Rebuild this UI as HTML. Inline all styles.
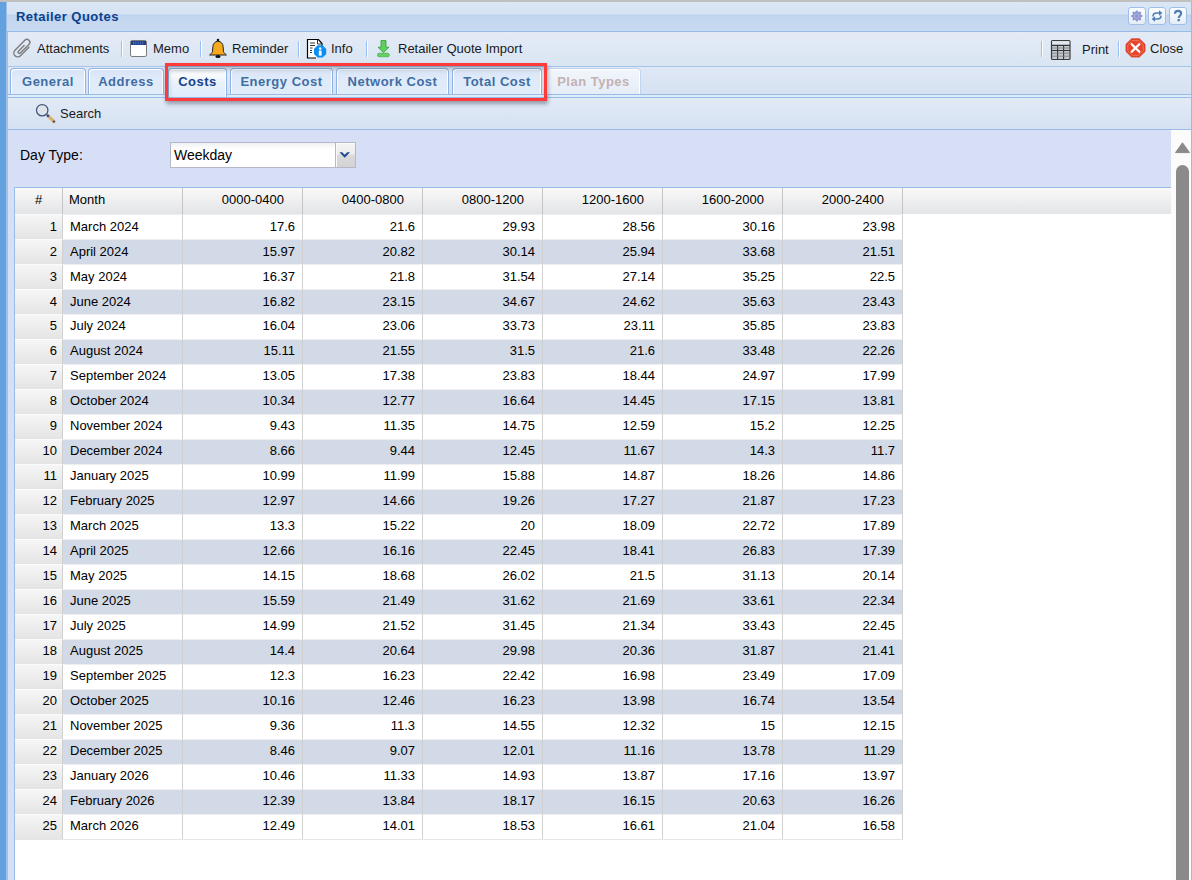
<!DOCTYPE html>
<html><head><meta charset="utf-8">
<style>
*{margin:0;padding:0;box-sizing:border-box}
html,body{width:1192px;height:880px;overflow:hidden;background:#fff;font-family:"Liberation Sans",sans-serif;font-size:13px;color:#000}
.abs{position:absolute}
#topline{left:0;top:0;width:1192px;height:2px;background:#c0c0c0}
#lbar{left:0;top:2px;width:6px;height:878px;background:#63a1de}
#lb2{left:6px;top:32px;width:2px;height:878px;background:#9fc0e9}
#rb{left:1191px;top:2px;width:1px;height:878px;background:#99bbe8}
#hdr{left:6px;top:2px;width:1185px;border-left:1px solid #9ebfea;height:30px;border-bottom:1px solid #99bbe8;
 background:linear-gradient(#dbe6f5 0,#d6e3f3 12px,#bcd2ee 13px,#c2d6ef 15px,#c8daf0 100%)}
#title{left:16px;top:9px;font-weight:bold;color:#0b3f8f;line-height:15px;white-space:nowrap;letter-spacing:.45px}
.tool{top:7px;width:18px;height:18px;border:1px solid #9fbfe9;border-radius:3px;background:linear-gradient(#fbfdff,#f1f6fd 50%,#e3edf9)}
#tb1{left:8px;top:32px;width:1183px;height:34px;background:linear-gradient(#e3ebf6,#dae5f3)}
.t{line-height:15px;white-space:nowrap;color:#1a1a1a}
.sep{top:41px;width:2px;height:16px;border-left:1px solid #98c0f4;border-right:1px solid #fff}
#tabbar{left:8px;top:66px;width:1183px;height:32px;background:linear-gradient(#dfe8f5,#d4e1f1);border-top:1px solid #a6c3ea}
.tab{top:68px;height:26px;border:1px solid #8db2e3;border-bottom:none;border-radius:4px 4px 0 0;
 background:linear-gradient(#d8e5f7,#dfeafa 40%,#e2edfb);box-shadow:inset 1px 1px 0 #fff,inset -1px 0 0 #fff;font-weight:bold;color:#416da3;text-align:center;line-height:15px;padding-top:5px;letter-spacing:.5px}
.tab.act{height:29px;background:linear-gradient(#d9dde2 0,#eef1f5 3px,#f9fbfd 6px,#e9f1fb 50%,#deecfd 100%);color:#15428b}
.tab.dis{color:#c4b1b3;background:linear-gradient(#f2f6fb,#e5edf8);border-color:#c2d5ee}
#strip{left:8px;top:94px;width:1183px;height:4px;border-top:1px solid #99bbe8;border-bottom:1px solid #99bbe8;background:#deecfd}
#tb2{left:8px;top:98px;width:1183px;height:32px;border-bottom:1px solid #99bbe8;background:linear-gradient(#e2eaf6,#d5e1f1)}
#form{left:8px;top:130px;width:1163px;height:57px;background:#d7dff7}
#lfill{left:8px;top:187px;width:6px;height:693px;background:#d7dff7}
#combo{left:170px;top:142px;width:186px;height:26px;border:1px solid #b5b8c8;background:linear-gradient(#eef0f2,#fff 6px)}
#trig{left:335px;top:142px;width:21px;height:26px;border:1px solid #b5b8c8;background:linear-gradient(#f4f4f4 0,#ededed 45%,#dadada 52%,#d3d3d3 100%);box-shadow:inset 1px 1px 0 #fafafa}
#grid{left:14px;top:187px;width:1157px;height:693px;border-left:1px solid #99bbe8;border-top:1px solid #99bbe8;background:#fff;overflow:hidden}
#sb{left:1171px;top:130px;width:20px;height:750px;background:#fbfbfb}
.r{position:relative;height:25px;display:flex;white-space:nowrap;line-height:15px}
.c{height:25px;width:120px;border-right:1px solid #d0d0d0;border-top:1px solid #efefef;padding:4px 7px 0 7px;text-align:right;flex:none;background-clip:padding-box}
.rn{width:48px;border-top-color:#fbfbfb;background:linear-gradient(#f6f6f6,#e4e4e4);padding-right:5px}
.m{text-align:left;padding-left:7px}
.fill{width:300px;border-right:none;border-top-color:#fff}
.alt .c{background:#d2d9e7}
.alt .rn{background:linear-gradient(#f6f6f6,#e4e4e4)}
.alt .fill{background:#fff}
.up .c{padding-top:3px}
.hd{height:26px;display:flex;white-space:nowrap;line-height:15px}
.hd .c{height:26px;background:linear-gradient(#f9f9f9,#e3e4e6);border-right:1px solid #c5c5c5;border-top:none;padding:4px 18px 0 6px}
.hd .h0{width:48px;text-align:center;padding:4px 0 0 0}
.hd .h1{text-align:left;padding-left:6px}
.hd .fill{width:300px;border-right:none;border-top-color:#fff}
</style></head><body>
<div id="topline" class="abs"></div>
<div id="hdr" class="abs"></div>
<div id="title" class="abs">Retailer Quotes</div>
<div class="abs tool" style="left:1128px"></div>
<div class="abs tool" style="left:1148px"></div>
<div class="abs tool" style="left:1169px"></div>

<div id="tb1" class="abs"></div>
<div class="abs t" style="left:37px;top:41px">Attachments</div>
<div class="abs sep" style="left:121px"></div>
<div class="abs t" style="left:153px;top:41px">Memo</div>
<div class="abs sep" style="left:200px"></div>
<div class="abs t" style="left:232px;top:41px">Reminder</div>
<div class="abs sep" style="left:298px"></div>
<div class="abs t" style="left:331px;top:41px">Info</div>
<div class="abs sep" style="left:366px"></div>
<div class="abs t" style="left:398px;top:41px">Retailer Quote Import</div>
<div class="abs sep" style="left:1041px"></div>
<div class="abs t" style="left:1082px;top:42px">Print</div>
<div class="abs sep" style="left:1118px"></div>
<div class="abs t" style="left:1150px;top:41px">Close</div>

<div id="tabbar" class="abs"></div>
<div class="abs tab" style="left:10px;width:76px">General</div>
<div class="abs tab" style="left:88px;width:76px">Address</div>
<div class="abs tab" style="left:230px;width:103px">Energy Cost</div>
<div class="abs tab" style="left:336px;width:113px">Network Cost</div>
<div class="abs tab" style="left:452px;width:90px">Total Cost</div>
<div class="abs tab dis" style="left:546px;width:95px">Plan Types</div>
<div id="strip" class="abs"></div>
<div class="abs tab act" style="left:168px;width:59px">Costs</div>

<div id="tb2" class="abs"></div>
<div class="abs t" style="left:60px;top:106px">Search</div>

<div id="form" class="abs"></div>
<div id="lfill" class="abs"></div>
<div class="abs t" style="left:20px;top:147px;font-size:14px;line-height:16px;color:#000">Day Type:</div>
<div id="combo" class="abs"></div>
<div id="trig" class="abs"></div>
<div class="abs t" style="left:174px;top:147px;font-size:14px;line-height:16px;color:#000">Weekday</div>

<div id="grid" class="abs">
<div class="hd"><div class="c h0">#</div><div class="c h1">Month</div><div class="c">0000-0400</div><div class="c">0400-0800</div><div class="c">0800-1200</div><div class="c">1200-1600</div><div class="c">1600-2000</div><div class="c">2000-2400</div><div class="c fill"></div></div>
<div class="r"><div class="c rn">1</div><div class="c m">March 2024</div><div class="c n">17.6</div><div class="c n">21.6</div><div class="c n">29.93</div><div class="c n">28.56</div><div class="c n">30.16</div><div class="c n">23.98</div><div class="c fill"></div></div>
<div class="r alt"><div class="c rn">2</div><div class="c m">April 2024</div><div class="c n">15.97</div><div class="c n">20.82</div><div class="c n">30.14</div><div class="c n">25.94</div><div class="c n">33.68</div><div class="c n">21.51</div><div class="c fill"></div></div>
<div class="r"><div class="c rn">3</div><div class="c m">May 2024</div><div class="c n">16.37</div><div class="c n">21.8</div><div class="c n">31.54</div><div class="c n">27.14</div><div class="c n">35.25</div><div class="c n">22.5</div><div class="c fill"></div></div>
<div class="r alt"><div class="c rn">4</div><div class="c m">June 2024</div><div class="c n">16.82</div><div class="c n">23.15</div><div class="c n">34.67</div><div class="c n">24.62</div><div class="c n">35.63</div><div class="c n">23.43</div><div class="c fill"></div></div>
<div class="r up"><div class="c rn">5</div><div class="c m">July 2024</div><div class="c n">16.04</div><div class="c n">23.06</div><div class="c n">33.73</div><div class="c n">23.11</div><div class="c n">35.85</div><div class="c n">23.83</div><div class="c fill"></div></div>
<div class="r up alt"><div class="c rn">6</div><div class="c m">August 2024</div><div class="c n">15.11</div><div class="c n">21.55</div><div class="c n">31.5</div><div class="c n">21.6</div><div class="c n">33.48</div><div class="c n">22.26</div><div class="c fill"></div></div>
<div class="r up"><div class="c rn">7</div><div class="c m">September 2024</div><div class="c n">13.05</div><div class="c n">17.38</div><div class="c n">23.83</div><div class="c n">18.44</div><div class="c n">24.97</div><div class="c n">17.99</div><div class="c fill"></div></div>
<div class="r up alt"><div class="c rn">8</div><div class="c m">October 2024</div><div class="c n">10.34</div><div class="c n">12.77</div><div class="c n">16.64</div><div class="c n">14.45</div><div class="c n">17.15</div><div class="c n">13.81</div><div class="c fill"></div></div>
<div class="r up"><div class="c rn">9</div><div class="c m">November 2024</div><div class="c n">9.43</div><div class="c n">11.35</div><div class="c n">14.75</div><div class="c n">12.59</div><div class="c n">15.2</div><div class="c n">12.25</div><div class="c fill"></div></div>
<div class="r up alt"><div class="c rn">10</div><div class="c m">December 2024</div><div class="c n">8.66</div><div class="c n">9.44</div><div class="c n">12.45</div><div class="c n">11.67</div><div class="c n">14.3</div><div class="c n">11.7</div><div class="c fill"></div></div>
<div class="r up"><div class="c rn">11</div><div class="c m">January 2025</div><div class="c n">10.99</div><div class="c n">11.99</div><div class="c n">15.88</div><div class="c n">14.87</div><div class="c n">18.26</div><div class="c n">14.86</div><div class="c fill"></div></div>
<div class="r up alt"><div class="c rn">12</div><div class="c m">February 2025</div><div class="c n">12.97</div><div class="c n">14.66</div><div class="c n">19.26</div><div class="c n">17.27</div><div class="c n">21.87</div><div class="c n">17.23</div><div class="c fill"></div></div>
<div class="r up"><div class="c rn">13</div><div class="c m">March 2025</div><div class="c n">13.3</div><div class="c n">15.22</div><div class="c n">20</div><div class="c n">18.09</div><div class="c n">22.72</div><div class="c n">17.89</div><div class="c fill"></div></div>
<div class="r up alt"><div class="c rn">14</div><div class="c m">April 2025</div><div class="c n">12.66</div><div class="c n">16.16</div><div class="c n">22.45</div><div class="c n">18.41</div><div class="c n">26.83</div><div class="c n">17.39</div><div class="c fill"></div></div>
<div class="r up"><div class="c rn">15</div><div class="c m">May 2025</div><div class="c n">14.15</div><div class="c n">18.68</div><div class="c n">26.02</div><div class="c n">21.5</div><div class="c n">31.13</div><div class="c n">20.14</div><div class="c fill"></div></div>
<div class="r up alt"><div class="c rn">16</div><div class="c m">June 2025</div><div class="c n">15.59</div><div class="c n">21.49</div><div class="c n">31.62</div><div class="c n">21.69</div><div class="c n">33.61</div><div class="c n">22.34</div><div class="c fill"></div></div>
<div class="r up"><div class="c rn">17</div><div class="c m">July 2025</div><div class="c n">14.99</div><div class="c n">21.52</div><div class="c n">31.45</div><div class="c n">21.34</div><div class="c n">33.43</div><div class="c n">22.45</div><div class="c fill"></div></div>
<div class="r up alt"><div class="c rn">18</div><div class="c m">August 2025</div><div class="c n">14.4</div><div class="c n">20.64</div><div class="c n">29.98</div><div class="c n">20.36</div><div class="c n">31.87</div><div class="c n">21.41</div><div class="c fill"></div></div>
<div class="r up"><div class="c rn">19</div><div class="c m">September 2025</div><div class="c n">12.3</div><div class="c n">16.23</div><div class="c n">22.42</div><div class="c n">16.98</div><div class="c n">23.49</div><div class="c n">17.09</div><div class="c fill"></div></div>
<div class="r up alt"><div class="c rn">20</div><div class="c m">October 2025</div><div class="c n">10.16</div><div class="c n">12.46</div><div class="c n">16.23</div><div class="c n">13.98</div><div class="c n">16.74</div><div class="c n">13.54</div><div class="c fill"></div></div>
<div class="r up"><div class="c rn">21</div><div class="c m">November 2025</div><div class="c n">9.36</div><div class="c n">11.3</div><div class="c n">14.55</div><div class="c n">12.32</div><div class="c n">15</div><div class="c n">12.15</div><div class="c fill"></div></div>
<div class="r up alt"><div class="c rn">22</div><div class="c m">December 2025</div><div class="c n">8.46</div><div class="c n">9.07</div><div class="c n">12.01</div><div class="c n">11.16</div><div class="c n">13.78</div><div class="c n">11.29</div><div class="c fill"></div></div>
<div class="r up"><div class="c rn">23</div><div class="c m">January 2026</div><div class="c n">10.46</div><div class="c n">11.33</div><div class="c n">14.93</div><div class="c n">13.87</div><div class="c n">17.16</div><div class="c n">13.97</div><div class="c fill"></div></div>
<div class="r up alt"><div class="c rn">24</div><div class="c m">February 2026</div><div class="c n">12.39</div><div class="c n">13.84</div><div class="c n">18.17</div><div class="c n">16.15</div><div class="c n">20.63</div><div class="c n">16.26</div><div class="c fill"></div></div>
<div class="r up"><div class="c rn">25</div><div class="c m">March 2026</div><div class="c n">12.49</div><div class="c n">14.01</div><div class="c n">18.53</div><div class="c n">16.61</div><div class="c n">21.04</div><div class="c n">16.58</div><div class="c fill"></div></div>
</div>
<div class="abs" style="left:15px;top:839px;width:888px;height:1px;background:#e6e6e6"></div>
<div id="sb" class="abs"></div>

<svg class="abs" style="left:0;top:0" width="1192" height="880" viewBox="0 0 1192 880">
<!-- paperclip -->
<g transform="translate(22.4,48.6) rotate(45) scale(1.22)" fill="none" stroke="#7c7c7c" stroke-width="1.15" stroke-linecap="round">
<path d="M3,-4.5 L3,5.2 A3.2,3.2 0 0 1 -3.4,5.2 L-3.4,-6.2 A2.4,2.4 0 0 1 1.4,-6.2 L1.4,3.8 A1.1,1.1 0 0 1 -0.8,3.8 L-0.8,-2.8"/>
</g>
<!-- memo -->
<rect x="130.5" y="40.5" width="16" height="16" rx="1.6" fill="#fff" stroke="#7a7a7a" stroke-width="1"/>
<rect x="131" y="41" width="15" height="4" fill="#1e3f8c"/>
<g stroke="#6c8ac6" stroke-width=".7"><path d="M133.5,41.5V44.5M135.8,41.5V44.5M138.1,41.5V44.5M140.4,41.5V44.5M142.7,41.5V44.5"/></g>
<!-- bell -->
<circle cx="218" cy="40" r="1.3" fill="#111"/>
<path d="M218,41.2 C215,41.6 213,43.5 212.9,46.5 L212.5,51.5 C212.2,53.2 210.5,54 209.6,55 L226.4,55 C225.5,54 223.8,53.2 223.5,51.5 L223.1,46.5 C223,43.5 221,41.6 218,41.2Z" fill="#f6a91c" stroke="#222" stroke-width="1"/>
<ellipse cx="218" cy="56.4" rx="2.6" ry="1.5" fill="#111"/>
<!-- info -->
<path d="M307.5,39.5 H318.5 L322,43.5 V52 L316,58 H307.5Z" fill="#fff"/><path d="M316,58 H307.5 V39.5 H318.5 L322,43.5 V47" fill="none" stroke="#000" stroke-width="1.2"/>
<path d="M317.5,40 V44 H321.5" fill="none" stroke="#333" stroke-width="1"/>
<g stroke="#333" stroke-width="1"><path d="M310,43H315M310,45.5H315M310,48H312.5M310,50.5H312M310,52.5H312"/></g>
<path d="M317.6,45.3 L322.6,45.3 L326.2,48.9 L326.2,53.9 L322.6,57.5 L317.6,57.5 L314,53.9 L314,48.9Z" fill="#0a8ef5"/>
<circle cx="320.2" cy="48.6" r="1.3" fill="#fff"/>
<rect x="318.8" y="50.6" width="2.8" height="5" fill="#fff"/>
<!-- download -->
<path d="M381,40.5 H386 V47.2 H389 L383.5,52.6 L378,47.2 H381Z" fill="#5fd05f" stroke="#2f9f2f" stroke-width=".8"/>
<rect x="377.5" y="53.2" width="11.8" height="3.6" rx="1.5" fill="#62d062" stroke="#3aa83a" stroke-width=".6"/>
<!-- print grid -->
<rect x="1051.5" y="40.5" width="18.5" height="19" rx="1" fill="#c3c9d0" stroke="#3b3b3b" stroke-width="1.2"/>
<rect x="1052.2" y="41.2" width="17.1" height="4" fill="#dfe7f1"/>
<g stroke="#333" stroke-width="1.1"><path d="M1051.5,45.4H1070M1051.5,50.5H1070M1057.6,45.4V59.5M1063.6,45.4V59.5"/></g>
<g stroke="#777" stroke-width=".8"><path d="M1052,48H1069.5M1052,53.2H1069.5M1052,56.2H1069.5"/></g>
<!-- close -->
<path d="M1131.6,38.8 L1139.4,38.8 L1145,44.3 L1145,51.5 L1139.4,57 L1131.6,57 L1126,51.5 L1126,44.3Z" fill="#e8442c" stroke="#d03a25" stroke-width=".8"/>
<path d="M1132.5,40.5 L1138.5,40.5 L1143.2,45 L1143.2,50.8 L1138.5,55.3 L1132.5,55.3 L1127.8,50.8 L1127.8,45Z" fill="none" stroke="#f27a66" stroke-width=".8"/>
<path d="M1131.7,44.3 L1139.3,51.8 M1139.3,44.3 L1131.7,51.8" stroke="#fff" stroke-width="2.3" stroke-linecap="round"/>
<!-- search -->
<circle cx="42.2" cy="110.2" r="5.7" fill="#dfe4ea" stroke="#46547a" stroke-width="1.25"/>
<path d="M48.6,116.4 L54,121.6" stroke="#dcae6c" stroke-width="3.2" stroke-linecap="round"/>
<path d="M47,114.8 L48.8,116.6" stroke="#3d4a6a" stroke-width="2.4"/>
<path d="M53.2,121 L54.6,122.2" stroke="#3d4a6a" stroke-width="2.2"/>
<!-- gear -->
<g transform="translate(1136.8,16)" fill="#8d95d2">
<circle r="4.4"/>
<g><rect x="-1" y="-5.6" width="2" height="11.2" rx=".6"/><rect x="-1" y="-5.6" width="2" height="11.2" rx=".6" transform="rotate(45)"/><rect x="-1" y="-5.6" width="2" height="11.2" rx=".6" transform="rotate(90)"/><rect x="-1" y="-5.6" width="2" height="11.2" rx=".6" transform="rotate(135)"/></g>
<circle r="2.3" fill="none" stroke="#b4bae3" stroke-width="1"/>
</g>
<!-- refresh -->
<g fill="none" stroke="#4f7db8" stroke-width="1.6">
<path d="M1153,16.5 C1153,14 1154.5,13 1156.5,13 L1159.5,13"/>
<path d="M1161,15.5 C1161,18 1159.5,19 1157.5,19 L1154.5,19"/>
</g>
<g fill="#4f7db8">
<path d="M1159,10.2 L1162.4,13 L1159,15.8Z"/>
<path d="M1155,16.2 L1151.6,19 L1155,21.8Z"/>
</g>
<!-- help -->
<path d="M1175,13.8 C1175,11.7 1176.4,10.9 1178,10.9 C1179.9,10.9 1181.1,12 1181.1,13.5 C1181.1,15.6 1178.7,15.8 1178.7,17.9" fill="none" stroke="#4f7db3" stroke-width="2.2"/>
<rect x="1177.5" y="19" width="2.4" height="2.2" fill="#4f7db3"/>
<!-- chevron -->
<path d="M339.4,152.2 L342.2,152.2 L344.7,154.8 L347.2,152.2 L350,152.2 L344.7,157.8Z" fill="#1f4a8f"/>
<!-- scrollbar -->
<path d="M1182.5,142.8 L1189.5,152.6 L1175.5,152.6Z" fill="#8a8a8a" stroke="#8a8a8a" stroke-width="1" stroke-linejoin="round"/>
<rect x="1176" y="165" width="13" height="720" rx="6.5" fill="#8a8a8a"/>
</svg>
<div id="lbar" class="abs"></div>
<div id="lb2" class="abs"></div>
<div id="rb" class="abs"></div>

<div class="abs" style="left:165px;top:63px;width:382px;height:38px;border:3px solid #ff3a3a;box-shadow:1px 3px 4px rgba(40,50,70,.42),inset 1px 3px 4px rgba(0,0,0,.22)"></div>
</body></html>
